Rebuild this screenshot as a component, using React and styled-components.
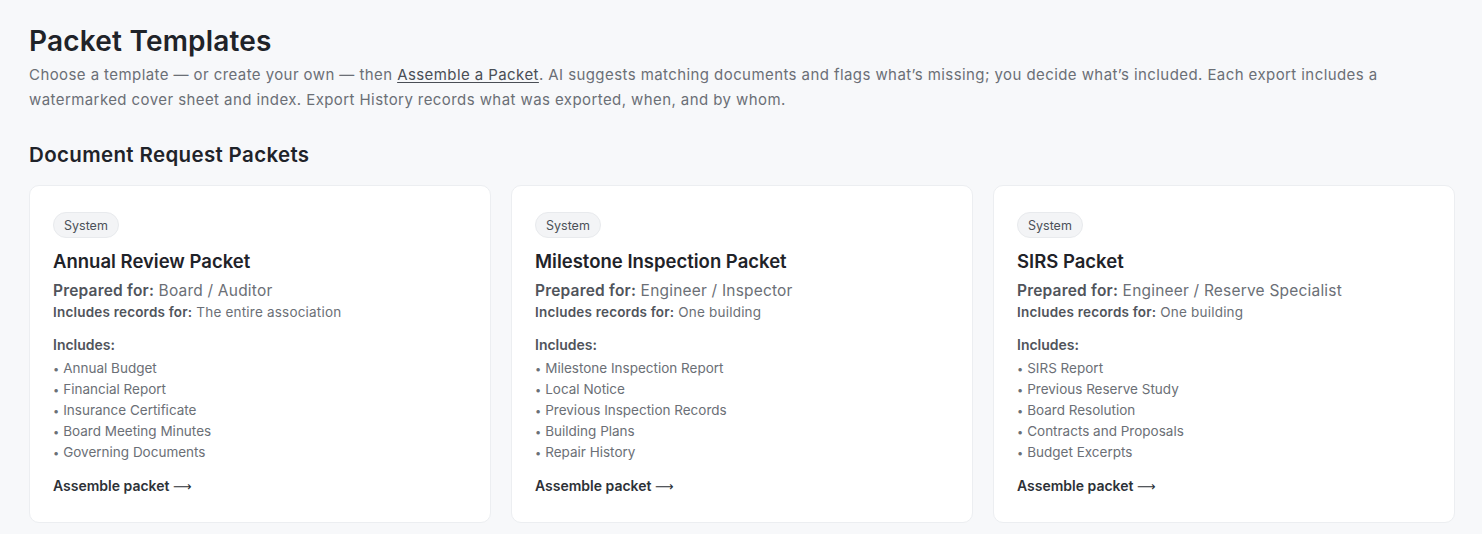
import React from 'react'
import styled, { createGlobalStyle } from 'styled-components'

const GlobalStyle = createGlobalStyle`
  html, body {
    margin: 0;
    padding: 0;
    background: #f7f8fa;
  }
  body {
    font-family: Inter, "Noto Sans", sans-serif;
    -webkit-font-smoothing: antialiased;
  }
`

const Page = styled.div`
  padding: 24px 27px 12px 29px;
  color: #1f2329;
`

const Title = styled.h1`
  margin: 0;
  font-size: 28px;
  line-height: 35px;
  font-weight: 600;
  letter-spacing: 0.2px;
  color: #1f2329;
`

const Intro = styled.p`
  margin: 3px 0 0;
  font-size: 15px;
  line-height: 25px;
  letter-spacing: 0.42px;
  color: #6b6f76;
  max-width: 1395px;

  a {
    color: #4a4e55;
    text-decoration: underline;
    text-underline-offset: 2px;
  }
`

const SectionTitle = styled.h2`
  margin: 29px 0 0;
  font-size: 20.5px;
  line-height: 28px;
  font-weight: 600;
  letter-spacing: 0.35px;
  color: #1f2329;
`

const Grid = styled.div`
  margin-top: 16px;
  display: grid;
  grid-template-columns: repeat(3, 1fr);
  gap: 20px;
`

const Card = styled.div`
  background: #ffffff;
  border: 1px solid #eceef1;
  border-radius: 10px;
  padding: 26px 23px 25px;
  display: flex;
  flex-direction: column;
  align-items: flex-start;
`

const Badge = styled.span`
  display: inline-flex;
  align-items: center;
  height: 24px;
  padding: 0 10px;
  border-radius: 999px;
  background: #f3f4f6;
  border: 1px solid #e8eaed;
  font-size: 12.5px;
  color: #4b5058;
`

const CardTitle = styled.h3`
  margin: 10px 0 0;
  font-size: 18.5px;
  line-height: 26px;
  font-weight: 600;
  color: #1f2329;
`

const Meta = styled.div`
  margin-top: ${p => p.$gap || 0}px;
  font-size: ${p => p.$size}px;
  line-height: ${p => p.$line}px;
  letter-spacing: 0.2px;
  color: #6b6f76;

  b {
    font-weight: 600;
    color: #50545b;
  }
`

const IncludesLabel = styled.div`
  margin-top: 13px;
  font-size: 14px;
  line-height: 20px;
  font-weight: 600;
  color: #50545b;
`

const List = styled.ul`
  list-style: none;
  margin: 3px 0 0;
  padding: 0;
`

const Item = styled.li`
  height: 21px;
  font-size: 13.5px;
  line-height: 21px;
  color: #6b6f76;

  &::before {
    content: '•';
    font-size: 11px;
    line-height: 1;
    margin-right: 4px;
  }
`

const Action = styled.a`
  margin-top: 13px;
  font-size: 14px;
  line-height: 20px;
  font-weight: 600;
  color: #2d3137;
  text-decoration: none;
  cursor: pointer;
`

const Arrow = styled.span`
  font-family: "DejaVu Sans", sans-serif;
  font-weight: 400;
  font-size: 13px;
`

const packets = [
  {
    name: 'Annual Review Packet',
    preparedFor: 'Board / Auditor',
    records: 'The entire association',
    items: ['Annual Budget', 'Financial Report', 'Insurance Certificate', 'Board Meeting Minutes', 'Governing Documents'],
  },
  {
    name: 'Milestone Inspection Packet',
    preparedFor: 'Engineer / Inspector',
    records: 'One building',
    items: ['Milestone Inspection Report', 'Local Notice', 'Previous Inspection Records', 'Building Plans', 'Repair History'],
  },
  {
    name: 'SIRS Packet',
    preparedFor: 'Engineer / Reserve Specialist',
    records: 'One building',
    items: ['SIRS Report', 'Previous Reserve Study', 'Board Resolution', 'Contracts and Proposals', 'Budget Excerpts'],
  },
]

export default function App() {
  return (
    <Page>
      <GlobalStyle />
      <Title>Packet Templates</Title>
      <Intro>
        Choose a template — or create your own — then <a>Assemble a Packet</a>. AI suggests matching documents and flags
        what’s missing; you decide what’s included. Each export includes a watermarked cover sheet and index. Export
        History records what was exported, when, and by whom.
      </Intro>
      <SectionTitle>Document Request Packets</SectionTitle>
      <Grid>
        {packets.map(packet => (
          <Card key={packet.name}>
            <Badge>System</Badge>
            <CardTitle>{packet.name}</CardTitle>
            <Meta $gap={6} $size={15.5} $line={22}>
              <b>Prepared for:</b> {packet.preparedFor}
            </Meta>
            <Meta $size={13.5} $line={20}>
              <b>Includes records for:</b> {packet.records}
            </Meta>
            <IncludesLabel>Includes:</IncludesLabel>
            <List>
              {packet.items.map(item => (
                <Item key={item}>{item}</Item>
              ))}
            </List>
            <Action>
              Assemble packet <Arrow>⟶</Arrow>
            </Action>
          </Card>
        ))}
      </Grid>
    </Page>
  )
}
